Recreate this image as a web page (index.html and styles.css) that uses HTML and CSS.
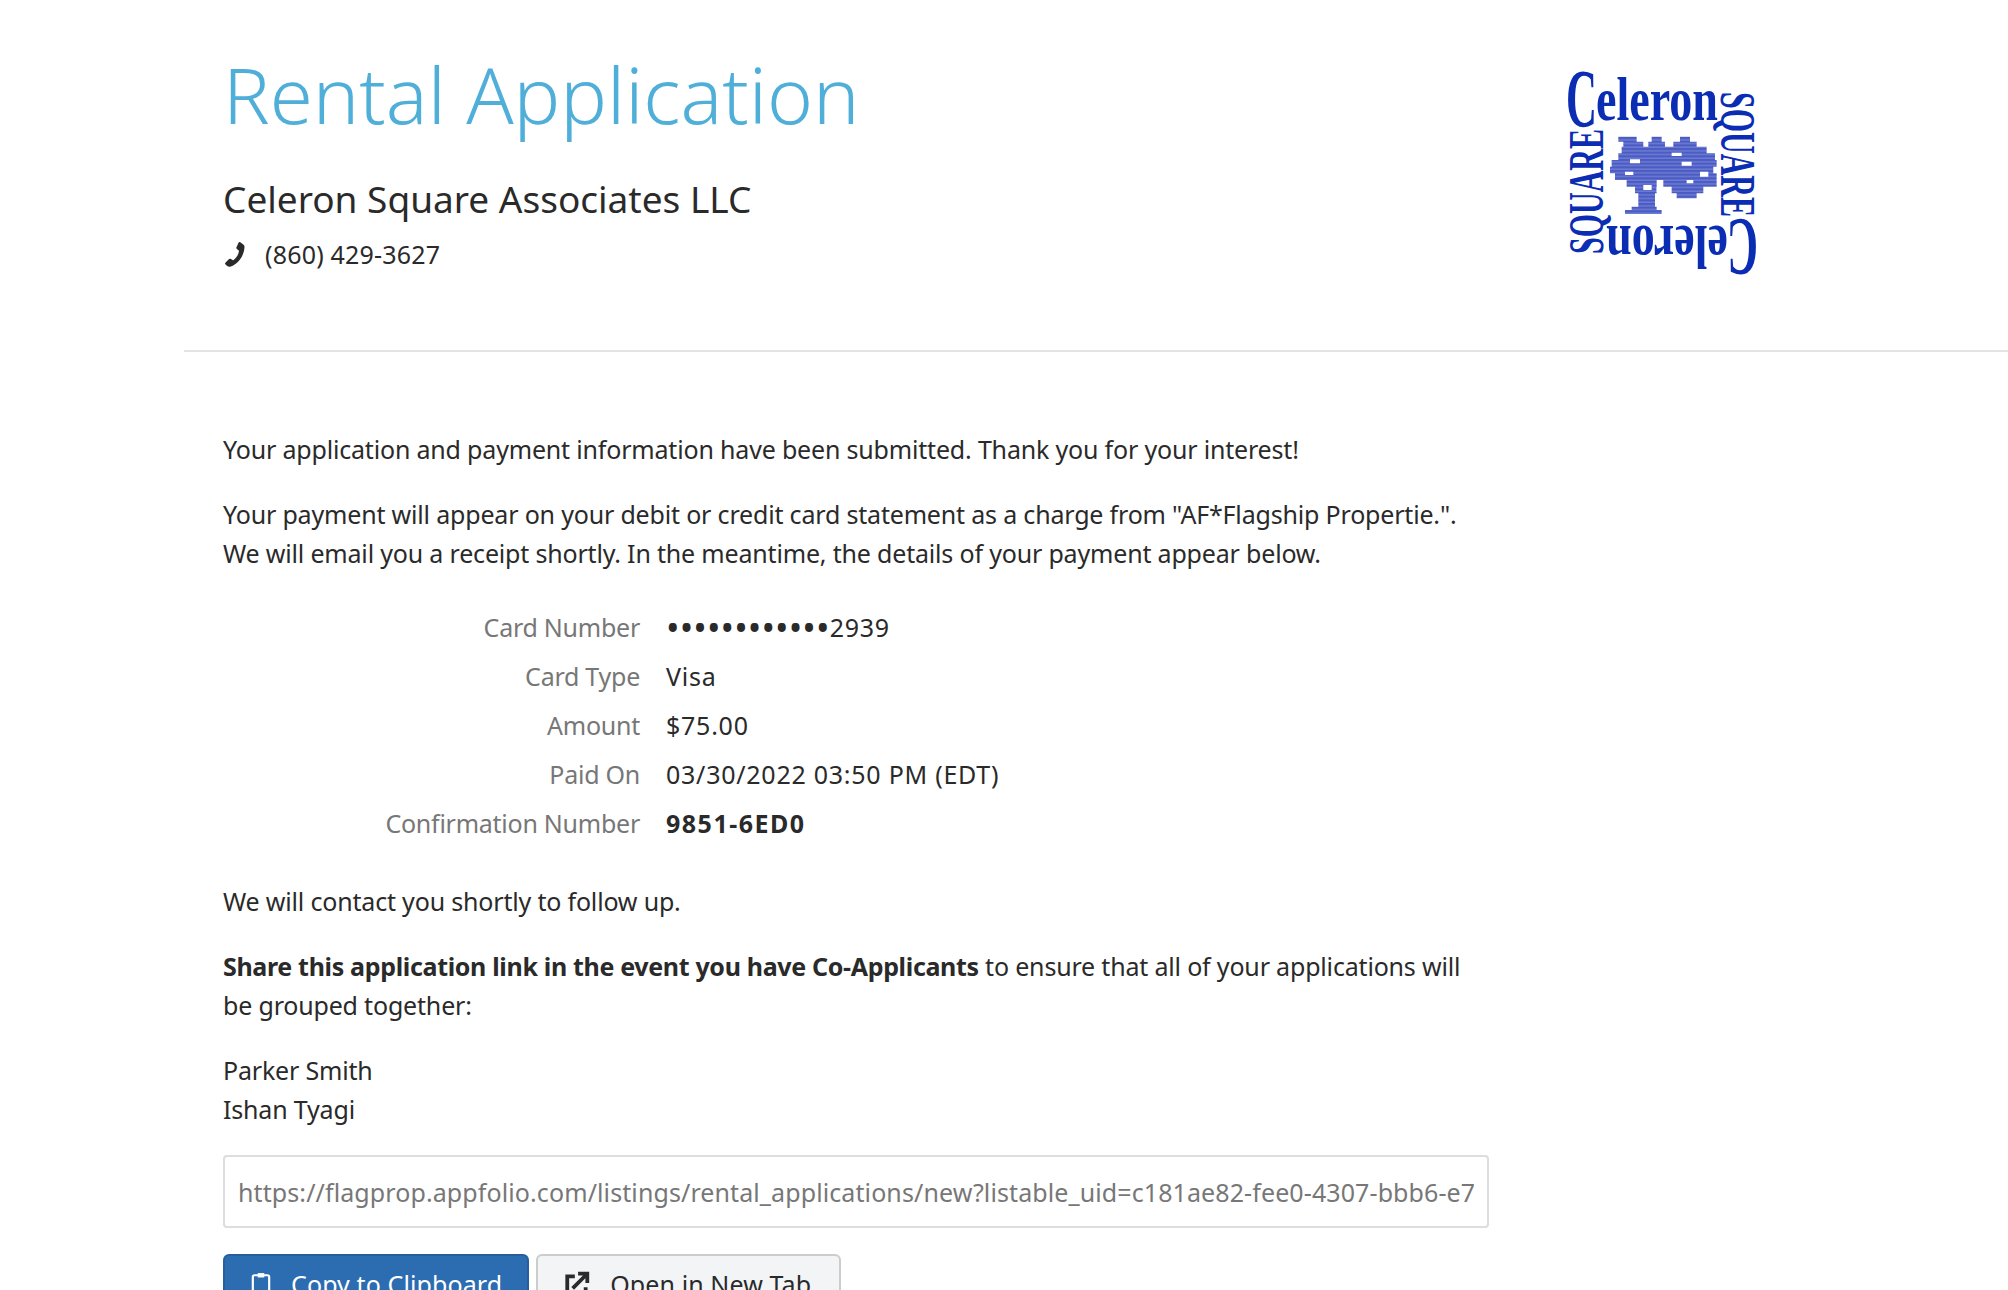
FILE: index.html
```html
<!DOCTYPE html>
<html lang="en">
<head>
    <meta charset="UTF-8">
    <title>Rental Application</title>
    <link rel="stylesheet" href="styles.css">
</head>
<body>
    <div class="page">
        <header class="top">
            <div class="top_info">
                <h1>Rental Application</h1>
                <h2>Celeron Square Associates LLC</h2>
                <p class="phone">
                    <svg class="phone_icon" viewBox="4 1 19 23" width="24" height="26"><path d="M18.2 1.200c-.7-.3-1.300-.1-1.600.5l-1.800 4c-.3.6-.1 1.100.4 1.500l1.600 1.300c.2.2.2.4.2.7-.5 3-2.300 5.900-4.800 7.700-.2.200-.5.200-.8 0l-1.800-1c-.6-.3-1.100-.2-1.600.3l-3 3.200c-.5.500-.4 1.100.1 1.500l1.500 1.300c1 .8 2 .9 3.200.5 6.500-2.300 11.500-9.300 12.100-16.900.1-1.300-.3-2.200-1.400-2.900z"/></svg>
                    <span>(860) 429-3627</span>
                </p>
            </div>
            <svg class="logo" viewBox="0 0 200 210" width="200" height="210">
                <defs>
                    <pattern id="tree_stripes" width="10" height="11" patternUnits="userSpaceOnUse">
                        <rect width="10" height="11" fill="#4a5bc4"/>
                        <rect y="7" width="10" height="3" fill="#7f8bd8"/>
                    </pattern>
                </defs>
                <g class="logo_text">
                    <g id="logo_half">
                        <text x="4" y="56" font-size="82" textLength="31" lengthAdjust="spacingAndGlyphs">C</text>
                        <text x="34" y="50" font-size="62" textLength="122" lengthAdjust="spacingAndGlyphs">eleron</text>
                        <text transform="translate(159 22) rotate(90)" font-size="50" textLength="125" lengthAdjust="spacingAndGlyphs">SQUARE</text>
                    </g>
                    <use href="#logo_half" transform="rotate(180 100 103)"/>
                </g>
                <g transform="translate(-22 -10) scale(.3333)">
                    <path class="logo_tree" d="M235 230h55v15h-55zM335 230h30v15h-30zM420 230h30v15h-30zM250 245h60v15h-60zM325 245h50v15h-50zM400 245h70v15h-70zM245 260h255v20H245zM235 280h290v20H235zM215 300h315v20H215zM210 320h310v20H210zM225 340h305v20H225zM260 360h90v20h-90zM370 360h160v20H370zM285 380h65v20h-65zM395 380h95v20h-95zM295 400h50v40h-50zM410 400h60v15h-60zM275 440h75v10h-75zM255 450h110v12H255z"/>
                    <path class="logo_holes" d="M270 298h30v12h-30zM395 278h30v10h-30zM425 305h30v12h-30zM480 335h25v15h-25zM310 375h25v15h-25zM255 335h25v10h-25zM350 382h15v15h-15zM440 360h20v10h-20z"/>
                </g>
            </svg>
        </header>

        <main class="content">
            <p>Your application and payment information have been submitted. Thank you for your interest!</p>
            <p>Your payment will appear on your debit or credit card statement as a charge from "AF*Flagship Propertie.". We will email you a receipt shortly. In the meantime, the details of your payment appear below.</p>

            <dl class="details">
                <dt>Card Number</dt><dd><span class="dots">••••••••••••</span>2939</dd>
                <dt>Card Type</dt><dd>Visa</dd>
                <dt>Amount</dt><dd>$75.00</dd>
                <dt>Paid On</dt><dd>03/30/2022 03:50 PM (EDT)</dd>
                <dt>Confirmation Number</dt><dd><strong>9851-6ED0</strong></dd>
            </dl>

            <p>We will contact you shortly to follow up.</p>
            <p><strong>Share this application link in the event you have Co-Applicants</strong> to ensure that all of your applications will be grouped together:</p>
            <p>Parker Smith<br>Ishan Tyagi</p>

            <input class="share_link" type="text" readonly value="https://flagprop.appfolio.com/listings/rental_applications/new?listable_uid=c181ae82-fee0-4307-bbb6-e7">

            <div class="actions">
                <a class="btn btn_primary" href="#">
                    <svg class="btn_icon" viewBox="3 1 18 22" width="20" height="24"><path d="M6 4h12a1.500 1.500 0 0 1 1.500 1.500v16A1.500 1.500 0 0 1 18 23H6a1.500 1.500 0 0 1-1.500-1.500v-16A1.500 1.500 0 0 1 6 4z" fill="none" stroke="currentColor" stroke-width="2"/><path d="M9 2h6v4H9z" fill="currentColor"/></svg>
                    Copy to Clipboard
                </a>
                <a class="btn" href="#">
                    <svg class="btn_icon" viewBox="0 0 24 24" width="26" height="26"><path d="M10 5H3v17h17v-7M8 16L21 3M13 2.500h8.500V11" fill="none" stroke="currentColor" stroke-width="3.500"/></svg>
                    Open in New Tab
                </a>
            </div>
        </main>
    </div>
</body>
</html>
```

FILE: styles.css
```css
html, body {
    height: 1290px;
    overflow: hidden;
}

body {
    margin: 0;
    color: #2a2a2a;
    background: #fff;
    font-family: "Noto Sans", "Open Sans", sans-serif;
    font-size: 25px;
    line-height: 39px;
}

.page {
    margin-left: 184px;
}

.top {
    display: flex;
    justify-content: space-between;
    height: 350px;
    padding: 0 246px 0 39px;
    border-bottom: 2px solid #e3e3e3;
}

h1 {
    margin: 44px 0 0;
    color: #4fafd9;
    font-size: 78px;
    font-weight: 300;
    line-height: 100px;
}

h2 {
    margin: 32px 0 0;
    font-size: 37px;
    font-weight: 400;
    line-height: 46px;
}

.phone {
    display: flex;
    align-items: center;
    margin: 13px 0 0;
    letter-spacing: 0.2px;
}

.phone_icon {
    margin-right: 18px;
    fill: #2a2a2a;
}

.logo {
    margin-top: 70px;
}

.logo_text {
    fill: #0b2db3;
    font-family: "Liberation Serif", serif;
    font-weight: 700;
}

.logo_tree {
    fill: url(#tree_stripes);
}

.logo_holes {
    fill: #fff;
}

.content {
    width: 1266px;
    padding: 78px 0 0 39px;
    letter-spacing: -0.18px;
}

.content p {
    margin: 0 0 26px;
}

.content strong {
    letter-spacing: -0.33px;
}

.details {
    display: grid;
    grid-template-columns: 417px 1fr;
    column-gap: 26px;
    row-gap: 10px;
    margin: 0 0 39px;
    padding-top: 9px;
}

.details dt {
    color: #777;
    text-align: right;
    letter-spacing: -0.25px;
}

.details dd {
    margin: 0;
    letter-spacing: 0.75px;
}

.details strong {
    letter-spacing: 1.5px;
}

.dots {
    font-size: 36px;
    line-height: 0;
    letter-spacing: 0.1px;
    vertical-align: -4px;
}

.share_link {
    display: block;
    box-sizing: border-box;
    width: 100%;
    height: 73px;
    padding: 0 13px;
    border: 2px solid #ddd;
    border-radius: 4px;
    color: #777;
    font: inherit;
    letter-spacing: 0.1px;
}

.actions {
    display: flex;
    gap: 7px;
    margin-top: 26px;
    letter-spacing: 0.1px;
}

.btn {
    display: flex;
    align-items: center;
    gap: 20px;
    box-sizing: border-box;
    height: 60px;
    padding: 0 28px 0 26px;
    border: 2px solid #ccc;
    border-radius: 6px;
    background: #f3f4f6;
    color: #2a2a2a;
    text-decoration: none;
}

.btn_primary {
    padding-right: 25px;
    border-color: #265f9c;
    background: #2c6cb0;
    color: #fff;
}
```
